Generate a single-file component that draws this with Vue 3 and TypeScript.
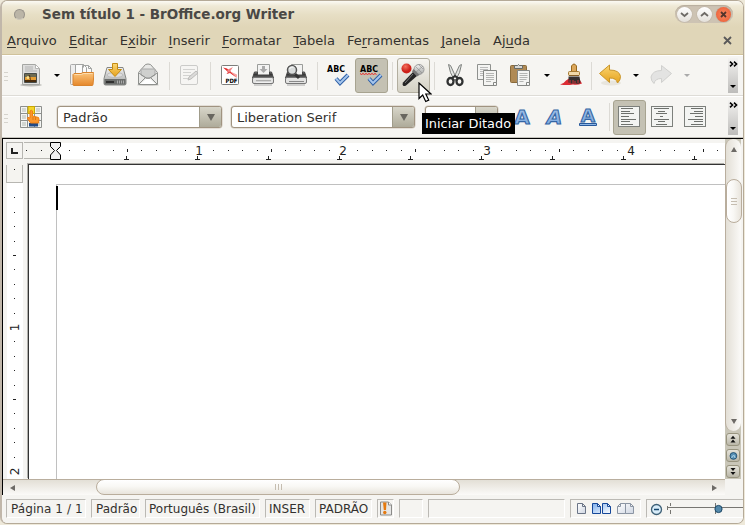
<script setup lang="ts">
interface Menu { pre: string; key: string; post: string }

const menus: Menu[] = [
  { pre: '', key: 'A', post: 'rquivo' },
  { pre: '', key: 'E', post: 'ditar' },
  { pre: 'E', key: 'x', post: 'ibir' },
  { pre: '', key: 'I', post: 'nserir' },
  { pre: '', key: 'F', post: 'ormatar' },
  { pre: '', key: 'T', post: 'abela' },
  { pre: 'Fe', key: 'r', post: 'ramentas' },
  { pre: '', key: 'J', post: 'anela' },
  { pre: 'Aj', key: 'u', post: 'da' },
]

const inch = 144
const step = inch / 10

function marks(from: number, to: number) {
  const list: { p: number; i: number }[] = []
  for (let i = from; i <= to; i++) if (i % 10 !== 0) list.push({ p: Math.round(i * step), i })
  return list
}

const hMarks = marks(-2, 46)
const vMarks = marks(-1, 19)
const tabs = Array.from({ length: 9 }, (_, n) => 102.5 + n * 71)
const rowY = Array.from({ length: 7 }, (_, n) => 3.5 + Math.round(n * 2.67))
const leftLens = [12, 9, 13, 8, 15, 9, 12]
const midLens = [15, 7, 11, 3, 15, 7, 11]
</script>

<template>
  <div class="window">
    <header class="title">
      <i class="dot"></i>
      <span class="caption">Sem título 1 - BrOffice.org Writer</span>
      <div class="controls">
        <svg class="ctl" viewBox="0 0 15 15"><path d="M4 6l3.500 3L11 6" /></svg>
        <svg class="ctl" viewBox="0 0 15 15"><path d="M4 9l3.500-3L11 9" /></svg>
        <svg class="ctl close" viewBox="0 0 15 15"><path d="M5 5l5 5M10 5l-5 5" /></svg>
      </div>
    </header>

    <nav class="menus">
      <span v-for="m in menus" :key="m.pre + m.key + m.post">{{ m.pre }}<u>{{ m.key }}</u>{{ m.post }}</span>
      <svg class="doc-close" viewBox="0 0 9 9"><path d="M1 1l7 7M8 1l-7 7" /></svg>
    </nav>

    <svg class="defs" width="0" height="0">
      <defs>
        <linearGradient id="orange" x2="0" y2="1"><stop stop-color="#fbc57c" /><stop offset="1" stop-color="#e5872a" /></linearGradient>
        <linearGradient id="gold" x2="0" y2="1"><stop stop-color="#fbd673" /><stop offset="1" stop-color="#e5a21d" /></linearGradient>
        <linearGradient id="metal" x2="0" y2="1"><stop stop-color="#f2f2f2" /><stop offset="1" stop-color="#a2a4a2" /></linearGradient>
        <linearGradient id="dark" x2="0" y2="1"><stop stop-color="#9a9a9a" /><stop offset=".35" stop-color="#333" /><stop offset="1" stop-color="#666" /></linearGradient>
        <linearGradient id="blue" x2="0" y2="1"><stop stop-color="#a4c4ea" /><stop offset="1" stop-color="#7aa6dc" /></linearGradient>
        <linearGradient id="page" x2="1" y2="1"><stop stop-color="#fff" /><stop offset="1" stop-color="#cfd6e2" /></linearGradient>
        <linearGradient id="pageblue" x2="1" y2="1"><stop stop-color="#7fb0ee" /><stop offset="1" stop-color="#fff" /></linearGradient>
        <radialGradient id="ball" cx=".4" cy=".3"><stop stop-color="#f4705c" /><stop offset="1" stop-color="#cc2019" /></radialGradient>
      </defs>
    </svg>

    <div class="toolbar">
      <i class="grip"></i>
      <button class="slot"><svg class="ic" viewBox="0 0 24 24">
        <ellipse cx="12" cy="22" rx="11" ry="1.500" fill="#bcbbb7" />
        <path d="M3.500 1.500h13l4 4v16h-17z" fill="#dededd" stroke="#a5a6a3" /><path d="M16.500 1.500v4h4z" fill="#fff" stroke="#b5b5b3" />
        <path d="M6 4h8M6 6h8M6 8h12" stroke="#b4b4b4" />
        <path d="M5.500 10.500h12v9h-12z" fill="#e59c32" stroke="#464b49" /><path d="M6 11h11v3h-11z" fill="#6d6b52" /><path d="M6 17h11v2H6zM11 12l1 6-3-5zM15 13l-2 5z" fill="#4a2c0c" /><circle cx="9" cy="14.500" r="1.500" fill="#fde28a" />
      </svg></button>
      <i class="caret"></i>
      <button class="slot"><svg class="ic" viewBox="0 0 24 24">
        <path d="M.5 2.500q0-1 1-1h4l2 3v17h-6q-1 0-1-1z" fill="#eee" stroke="#aaa" /><path d="M5.500 1.500h8l3 3v12h-11zM12.500 2.500h6l3 3v9h-9z" fill="#fbfbfb" stroke="#a2a4a2" /><path d="M18.500 2.500v3h3M13.500 1.500v3" fill="none" stroke="#a2a4a2" />
        <path d="M4 10.500h7l2-1h10q1 0 1 1l-1 11q0 1-1 1H4q-1 0-1-1v-10z" fill="url(#orange)" stroke="#d9832c" /><path d="M4.500 11.500h7l2-1h9" fill="none" stroke="#fddcae" />
      </svg></button>
      <button class="slot"><svg class="ic" viewBox="0 0 24 24">
        <path d="M4 4.500h16l3 11v5q0 1.500-1.500 1.500h-19Q1 22 1 20.500v-5z" fill="url(#metal)" stroke="#858784" /><path d="M1.500 16h21v5.500h-21z" fill="#6b6d6b" /><path d="M3 19h8" stroke="#303030" stroke-width="2" /><path d="M14.500 17.500v3M16.500 17.500v3M18.500 17.500v3M20.500 17.500v3" stroke="#aaa" /><ellipse cx="12" cy="12" rx="8" ry="2.500" fill="#ddd" stroke="#bbb" />
        <path d="M9.500.5h5v6h4l-6.500 7-6.500-7h4z" fill="url(#gold)" stroke="#c38b12" />
      </svg></button>
      <button class="slot"><svg class="ic" viewBox="0 0 24 24">
        <ellipse cx="12" cy="22" rx="11" ry="1" fill="#d2d1ce" />
        <path d="M2.500 9.500l7-8q2.500-1 5 0l7 8v12h-19z" fill="#e8e8e6" stroke="#8f918e" /><path d="M5 6h14v6l-7 4-7-4z" fill="#cfd0ce" stroke="#aaa" /><path d="M3 10l7 5h4l7-5M3 21l7-7M21 21l-7-7" fill="none" stroke="#8f918e" /><path d="M4.500 21l5.500-5h4l5.500 5z" fill="#fff" />
      </svg></button>
      <i class="sep"></i>
      <button class="slot faded"><svg class="ic" viewBox="0 0 24 24">
        <rect x="3.500" y="2.500" width="17" height="19" rx="1.500" fill="#f7f7f6" stroke="#999" /><path d="M6 6.500h12M6 9.500h8M6 12.500h9M6 15.500h5" stroke="#aaa" /><path d="M11 17l1-3 7-6 2 2-7 6z" fill="#bbb" stroke="#777" />
      </svg></button>
      <i class="sep"></i>
      <button class="slot"><svg class="ic" viewBox="0 0 24 24">
        <rect x="3.500" y="2.500" width="17" height="19" rx="1" fill="#fff" stroke="#7c7e7b" /><path d="M5 4.500l4 1 6 5 4 4.500-7-5-3.500 1 1.500-2z" fill="#e32a2a" /><path d="M9 7l4-2 2-1-4 6z" fill="#f08080" /><path d="M12 8.500l7 3v3z" fill="#f7a3a3" />
        <text x="7.500" y="20" class="pdf" textLength="12" lengthAdjust="spacingAndGlyphs">PDF</text>
      </svg></button>
      <button class="slot"><svg class="ic" viewBox="0 0 24 24">
        <path d="M6.500 1.500h12v11h-12z" fill="#f3f3f2" stroke="#9b9d9a" /><path d="M11 3h3v3h2.500l-4 4-4-4H11z" fill="#aaa" />
        <path d="M3.500 9h3v3h12V9h2l2 6H1.500z" fill="url(#dark)" stroke="#444" /><rect x="1.500" y="14.500" width="21" height="6" rx="1.500" fill="#e3e3e2" stroke="#777" /><path d="M5 18h15" stroke="#777" /><path d="M5 19h15" stroke="#fff" /><path d="M3 22h18" stroke="#aaa" />
      </svg></button>
      <button class="slot"><svg class="ic" viewBox="0 0 24 24">
        <path d="M7.500 1.500h11v11h-11z" fill="#f3f3f2" stroke="#9b9d9a" />
        <path d="M3.500 9h3v3h12V9h2l2 6H1.500z" fill="url(#dark)" stroke="#444" /><rect x="1.500" y="14.500" width="21" height="6" rx="1.500" fill="#e3e3e2" stroke="#777" /><path d="M5 18.500h15" stroke="#888" /><path d="M3 22h18" stroke="#aaa" /><path d="M11 11l4 4" stroke="#333" stroke-width="3" /><circle cx="8" cy="7" r="4.500" fill="#d9dcdc" stroke="#555" stroke-width="1.500" /><path d="M5.500 6q1.500-3 4-2" stroke="#fff" fill="none" />
      </svg></button>
      <i class="sep wide"></i>
      <button class="slot"><svg class="ic" viewBox="0 0 24 24">
        <text x="1" y="9" class="abc" textLength="18" lengthAdjust="spacingAndGlyphs">ABC</text><path d="M10 15.500l4 4.500 8-8" class="check-edge" /><path d="M10 15.500l4 4.500 8-8" class="check" />
      </svg></button>
      <button class="slot on"><svg class="ic" viewBox="0 0 24 24">
        <text x="1" y="9" class="abc" textLength="18" lengthAdjust="spacingAndGlyphs">ABC</text><path d="M1 10.500l1.500 1L4 10.500l1.500 1L7 10.500l1.500 1L10 10.500l1.500 1L13 10.500l1.500 1L16 10.500l1.500 1" stroke="#e22" fill="none" /><path d="M10 15.500l4 4.500 8-8" class="check-edge" /><path d="M10 15.500l4 4.500 8-8" class="check" />
      </svg></button>
      <i class="sep wide"></i>
      <button class="slot hover"><svg class="ic" viewBox="0 0 24 24">
        <path d="M12.500 8.500l4 4L5 22.500q-2 1-3 0t0-3z" fill="#252525" /><path d="M12 11l-8 9" stroke="#777" /><circle cx="18" cy="6.500" r="5" fill="url(#metal)" stroke="#9a9a9a" /><path d="M15 4l6 6M18 2l4 4M14 10l8-7" stroke="#888" stroke-width=".6" /><path d="M12.500 6l6 6-2.500 1.500-5-5z" fill="#777" /><circle cx="5.500" cy="5.500" r="5" fill="url(#ball)" />
      </svg></button>
      <i class="sep wide"></i>
      <button class="slot"><svg class="ic" viewBox="0 0 24 24">
        <path d="M5.500 1.500l2 1 6 13-2 2q-5-8-6-16zM18.500 1.500l-2 1-6 13 2 2q5-8 6-16z" fill="#e3e5e3" stroke="#7d807d" /><ellipse cx="7.500" cy="18.500" rx="3" ry="3.500" fill="none" stroke="#303232" stroke-width="2.300" /><ellipse cx="16.500" cy="18.500" rx="3" ry="3.500" fill="none" stroke="#303232" stroke-width="2.300" /><path d="M9 15l3-2 3 2" fill="none" stroke="#303232" stroke-width="2" />
      </svg></button>
      <button class="slot"><svg class="ic" viewBox="0 0 24 24">
        <path d="M1.500 1.500h13v15h-13z" fill="#f4f4f2" stroke="#8f918e" /><path d="M4 4.500h8M4 6.500h8M4 8.500h5M4 10.500h3M4 12.500h3" stroke="#bbb" /><path d="M7.500 7.500h13v15h-13z" fill="#f4f4f2" stroke="#858784" /><path d="M10 10.500h8M10 12.500h8M10 14.500h8M10 16.500h8M10 18.500h5" stroke="#b4b5b3" /><path d="M17.500 22v-2.500h3" fill="#fff" stroke="#858784" />
      </svg></button>
      <button class="slot"><svg class="ic" viewBox="0 0 24 24">
        <rect x="1.500" y="2.500" width="16" height="17" rx="1" fill="#b08a55" stroke="#8a6a3a" /><path d="M5.500 5.500v-3h3q1-2 2 0h3v3z" fill="#d6d7d5" stroke="#686a67" /><path d="M8.500 7.500h12v15h-12z" fill="#f4f4f2" stroke="#858784" /><path d="M10.500 10.500h8M10.500 12.500h8M10.500 14.500h8M10.500 16.500h7M10.500 18.500h4" stroke="#b4b5b3" /><path d="M17.500 22v-2.500h3" fill="#fff" stroke="#858784" />
      </svg></button>
      <i class="caret"></i>
      <button class="slot"><svg class="ic" viewBox="0 0 24 24">
        <path d="M0 21.500q4-1 6-4l3-2h10l3 5q-5 2-9 1-6 1-13 0z" fill="#dc2c34" /><path d="M8.500 13.500h11l1 6q-2 2-4 1-4 1-8-1z" fill="#37302f" /><path d="M10 17v3M13 17v4M15 18v3M18 17v3" stroke="#d3333a" /><path d="M11.500 9V3q2.500-4 5 0v6z" fill="#dca75a" stroke="#96671e" /><rect x="8.500" y="8.500" width="11" height="4" rx="1" fill="#f1d9aa" stroke="#a57a34" /><path d="M9 12.500h10" stroke="#875f26" />
      </svg></button>
      <i class="sep thin"></i>
      <button class="slot"><svg class="ic" viewBox="0 0 24 24">
        <ellipse cx="13" cy="20" rx="10" ry="2.500" fill="#e8e5dd" />
        <path d="M1.500 10.500l10-8.500v5q10 0 11 6.500 0 4-3 6.500-1-5-8-5v4.500z" fill="url(#gold)" stroke="#c9952a" />
      </svg></button>
      <i class="caret"></i>
      <button class="slot"><svg class="ic" viewBox="0 0 24 24">
        <path d="M22.500 10.500L12.500 2.500v5q-9 0-10.500 6.500 0 4 3 6.500 1-5 7.500-5v4z" fill="#e3e3e2" stroke="#d0d0ce" />
      </svg></button>
      <i class="caret off"></i>
      <div class="more"><b></b></div>
      <svg class="chevrons" viewBox="0 0 9 6"><path d="M1 .7L3.500 3 1 5.300M5 .7L7.500 3 5 5.300" /></svg>
    </div>

    <div class="toolbar second">
      <i class="grip"></i>
      <button class="slot styles"><svg class="ic" viewBox="0 0 24 24">
        <path d="M1.500 1.500h21v21h-21z" fill="#f3f4f2" stroke="#8d8f8c" /><path d="M8.500 1v22M15.500 1v22M1 8.500h22M1 15.500h22" stroke="#8d8f8c" /><path d="M3 3h4v4H3zM17 3h4v4h-4zM3 10h4v4H3zM3 17h4v4H3zM17 17h4v4h-4z" fill="#d2d6d2" /><path d="M9 1.500h6.500v7H9z" fill="#f3d52b" stroke="#c9a700" /><path d="M10 18h9v3.500h-9z" fill="#204a87" /><path d="M11 6q1.500-1.500 2.500 0v5l6 1.500q1 1 0 5.500h-8l-3-4.500q-.5-2 2.500-.5z" fill="#f9962e" stroke="#f07f10" /><path d="M14 12v3M16.500 12v3" stroke="#e07a10" />
      </svg></button>
      <div class="combo style"><span>Padrão</span><b><i></i></b></div>
      <div class="combo font"><span>Liberation Serif</span><b><i></i></b></div>
      <div class="combo size"><span>12</span><b><i></i></b></div>
      <button class="slot bold"><svg class="ic" viewBox="0 0 24 24"><text x="12" y="18.500" class="glyph fat">A</text></svg></button>
      <button class="slot"><svg class="ic" viewBox="0 0 24 24"><text x="11.500" y="18.500" class="glyph fat slant">A</text></svg></button>
      <button class="slot"><svg class="ic" viewBox="0 0 24 24"><text x="12" y="16.500" class="glyph">A</text><path d="M3.500 18.500h17v2h-17z" fill="#8db6e6" stroke="#28599b" /></svg></button>
      <i class="sep"></i>
      <button class="slot on"><svg class="ic" viewBox="0 0 24 24"><rect x="1.500" y="1.500" width="21" height="20" class="sheet" /><path v-for="(y, r) in rowY" :key="r" :d="`M4 ${y}h${leftLens[r]}`" class="ln" /></svg></button>
      <button class="slot"><svg class="ic" viewBox="0 0 24 24"><rect x="1.500" y="1.500" width="21" height="20" class="sheet" /><path v-for="(y, r) in rowY" :key="r" :d="`M${11.500 - midLens[r] / 2} ${y}h${midLens[r]}`" class="ln" /></svg></button>
      <button class="slot"><svg class="ic" viewBox="0 0 24 24"><rect x="1.500" y="1.500" width="21" height="20" class="sheet" /><path v-for="(y, r) in rowY" :key="r" :d="`M20 ${y}h-${leftLens[r]}`" class="ln" /></svg></button>
      <div class="more"><b></b></div>
      <svg class="chevrons" viewBox="0 0 9 6"><path d="M1 .7L3.500 3 1 5.300M5 .7L7.500 3 5 5.300" /></svg>
    </div>

    <main class="work">
      <div class="left">
        <div class="top-ruler">
          <div class="tabstop"><i></i></div>
          <svg class="hruler" width="701" height="20" viewBox="0 0 701 20" shape-rendering="crispEdges">
            <path d="M0 1h701v16H0z" fill="#fff" /><path d="M0 1h31v15H0z" fill="#f5f4f0" /><path d="M0 .5h31M0 16.500h31" stroke="#b7b6b1" />
            <rect v-for="m in hMarks" :key="m.i" :x="31 + m.p" :y="m.i % 5 === 0 ? 7 : 8" width="1" :height="m.i % 5 === 0 ? 3 : 1" fill="#222" />
            <path v-for="t in tabs" :key="t" :d="`M${t} 14v4M${t - 2.5} 17.500h5`" class="tab" />
            <text v-for="n in 4" :key="n" :x="31 + n * inch" y="12.500" class="num">{{ n }}</text>
            <path d="M26.500.5h10v4l-4 4 4 4.500v4.500h-10V13l4-4.500-4-4z" fill="#f0f0f0" stroke="#000" shape-rendering="auto" />
          </svg>
        </div>
        <div class="canvas">
          <svg class="vruler" width="18" height="315" viewBox="0 0 18 315" shape-rendering="crispEdges">
            <path d="M1 1h16v314H1z" fill="#fff" /><path d="M.5 1v17.500h16V1" fill="#f5f4f0" stroke="#b7b6b1" />
            <rect v-for="m in vMarks" :key="m.i" :x="m.i % 5 === 0 ? 7 : 8" :y="19 + m.p" :width="m.i % 5 === 0 ? 3 : 1" height="1" fill="#222" />
            <text v-for="n in 2" :key="n" :transform="`translate(12.500 ${19.500 + n * inch}) rotate(-90)`" class="num">{{ n }}</text>
          </svg>
          <div class="paper"><div class="margins"><i class="insertion"></i></div></div>
        </div>
        <div class="hscroll">
          <i class="arrow l"></i><div class="hthumb"><i></i><i></i><i></i></div><i class="arrow r"></i>
        </div>
      </div>
      <div class="right">
        <div class="vscroll"><i class="arrow u"></i><div class="vthumb"><i></i><i></i><i></i></div><i class="arrow d"></i></div>
        <div class="navs">
          <span><svg viewBox="0 0 13 13"><path d="M6.500 2l3 3.500h-6zM6.500 6.500l3 3.500h-6z" fill="#111" /></svg></span>
          <span><svg viewBox="0 0 13 13"><circle cx="7" cy="7" r="4" fill="#5790b5" stroke="#174769" /><path d="M5 9.500q0-3 3-3l1 3" fill="none" stroke="#bde0f3" /></svg></span>
          <span><svg viewBox="0 0 13 13"><path d="M6.500 6l3-3.500h-6zM6.500 10.500l3-3.500h-6z" fill="#111" /></svg></span>
        </div>
        <div class="corner"></div>
      </div>
    </main>

    <footer class="status">
      <span class="f1">Página 1 / 1</span>
      <span class="f2">Padrão</span>
      <span class="f3">Português (Brasil)</span>
      <span class="f4">INSER</span>
      <span class="f5">PADRÃO</span>
      <span class="f6"><svg viewBox="0 0 14 16"><path d="M1.500 1.500h8l3 3v10h-11z" fill="#e6e6e5" stroke="#8b8b89" /><path d="M9.500 1.500v3h3" fill="#fff" stroke="#8b8b89" /><path d="M4 2h3.500L7 9.500H4.800z" fill="#e57a10" /><circle cx="5.800" cy="12" r="1.700" fill="#e57a10" /></svg></span>
      <span class="f7"></span>
      <span class="f8"></span>
      <span class="f9"><svg viewBox="0 0 68 16">
        <path d="M5.500 3.500h5l3 3v7h-8zM10.500 3.500v3h3" fill="url(#page)" stroke="#6b7587" />
        <path d="M20.500 3.500h5l3 3v7h-8zM25.500 3.500v3h3M30.500 3.500h5l3 3v7h-8zM35.500 3.500v3h3" fill="url(#pageblue)" stroke="#16489a" />
        <path d="M48.500 3.500h5v10h-8v-7zM53.500 3.500h5l3 3v7h-8zM48.500 3.500v3h-3M58.500 3.500v3h3" fill="url(#page)" stroke="#8b95a3" />
      </svg></span>
      <span class="f10"><svg viewBox="0 0 97 18">
        <circle cx="9.500" cy="9.500" r="5" fill="#d8ecf9" stroke="#3f6177" stroke-width="1.300" /><path d="M7 9.500h5" stroke="#17486e" stroke-width="1.500" />
        <path d="M20 7.500h77M23.500 3v3M23.500 10v4M20.500 6v4M68.500 3v11" fill="none" stroke="#777672" /><circle cx="71.500" cy="9" r="3.600" fill="#5489ab" stroke="#1c4766" />
      </svg></span>
    </footer>

    <div class="tooltip">Iniciar Ditado</div>
    <svg class="pointer" viewBox="0 0 14 21"><path d="M1 1v15.500l3.700-3.500 3 6.500 3-1.400-2.900-6.100H13z" fill="#fff" stroke="#000" stroke-width="1.200" /></svg>
  </div>
</template>

<style>
body { background: #eee9da; overflow: hidden; }
</style>

<style scoped>
* { box-sizing: border-box; }
.window { position: relative; width: 744px; height: 524px; border: 1px solid #b5aa98; border-left: 2px solid #c1b7aa; border-radius: 7px; overflow: hidden; display: flex; flex-direction: column; background: #f5f4f1; font: 13px "DejaVu Sans", sans-serif; color: #33312e; }
.defs { display: block; flex: none; height: 0; }
.title { height: 26px; flex: none; display: flex; align-items: center; padding-left: 12px; background: linear-gradient(#fbfaf4 0, #efe9d6 5px, #e6dec4 14px, #e0d6b8 26px); }
.dot { width: 11px; height: 11px; border-radius: 50%; background: #bbb5a7; border: 1px solid #97928a; border-bottom-color: #cdc8ba; }
.caption { margin-left: 17px; font-weight: bold; font-size: 13.500px; color: #4a4845; white-space: nowrap; width: 265px; }
.controls { margin-left: auto; margin-right: 10px; width: 58px; height: 18px; border-radius: 9px; background: #cdc3b3; display: flex; align-items: center; justify-content: space-between; padding: 0 2px; box-shadow: inset 0 1px 1px #b9ae9e; }
.ctl { width: 15px; height: 15px; border-radius: 50%; background: linear-gradient(#fff, #e4e0da); fill: none; stroke: #6d6a66; stroke-width: 1.8; box-shadow: 0 0 1px #8d8377; }
.ctl.close { background: radial-gradient(#fa8a62, #e8582f); stroke: #54352c; }
.menus { height: 28px; flex: none; background: #e0d6b8; border-bottom: 1px solid #d0c29b; display: flex; align-items: center; padding: 0 11px 0 5px; gap: 12.200px; white-space: nowrap; }
.menus u { text-underline-offset: 2px; text-decoration-thickness: 1px; }
.doc-close { width: 9px; height: 9px; margin-left: auto; stroke: #595959; stroke-width: 1.8; }
.toolbar { position: relative; height: 41px; flex: none; display: flex; align-items: center; background: #f6f5f2; border-bottom: 1px solid #dedcd7; border-top: 1px solid #fff; }
.toolbar.second { height: 42px; border-bottom: 1px solid #c6c4bd; }
.grip { width: 4px; height: 9px; margin: 2px 7px 0 2px; flex: none; background: repeating-linear-gradient(#d5d3cd 0 1px, transparent 1px 4px); }
.slot { width: 33px; height: 35px; flex: none; padding: 0 1px 1px 0; border: 1px solid transparent; border-radius: 3px; background: none; display: flex; align-items: center; justify-content: center; }
.slot.on { background: #c4c1b3; border-color: #a7a390; }
.slot.hover { background: linear-gradient(#f6f5f1, #d3d0c3); border-color: #b2ae9f; }
.faded { opacity: .45; }
.ic { width: 24px; height: 24px; flex: none; display: block; }
.caret { width: 18px; flex: none; display: flex; justify-content: center; padding-right: 1px; }
.caret::before { content: ""; border: 3px solid transparent; border-top-color: #000; border-bottom: 0; }
.caret.off::before { border-top-color: #aaa; }
.sep { width: 8px; height: 28px; flex: none; background: linear-gradient(#dcdad5, #dcdad5) center / 1px 100% no-repeat; }
.sep.wide { width: 9px; }
.sep.thin { width: 5px; }
.pdf { font: bold 6px "DejaVu Sans", sans-serif; fill: #000; }
.abc { font: bold 9.500px "DejaVu Sans", sans-serif; fill: #000; }
.check-edge { fill: none; stroke: #2c5ea6; stroke-width: 4; }
.check { fill: none; stroke: #a6c6ec; stroke-width: 2; }
.more { margin-left: auto; margin-right: 5px; width: 10px; height: 35px; background: linear-gradient(#f3f2f0, #bdbcba); display: flex; align-items: flex-end; justify-content: center; padding-bottom: 5px; }
.more b { border: 3px solid transparent; border-top-color: #000; border-bottom: 0; }
.chevrons { position: absolute; right: 5px; top: 5px; width: 9px; height: 6px; fill: none; stroke: #000; stroke-width: 1.600; }
.combo { height: 22px; flex: none; border: 1px solid #a09380; border-radius: 3px; background: #fff; display: flex; align-items: center; box-shadow: 0 0 0 .5px #cfc8bb; overflow: hidden; }
.combo span { flex: 1; padding-left: 5px; white-space: nowrap; }
.combo b { width: 22px; height: 100%; background: linear-gradient(#d8d6ca, #aeab9a); border-left: 1px solid #a09c8b; display: flex; align-items: center; justify-content: center; }
.combo b i { border: 4px solid transparent; border-top: 7px solid #68665f; border-bottom: 0; }
.combo.style { width: 165px; margin-left: 9px; }
.combo.font { width: 184px; margin-left: 9px; }
.combo.size { width: 73px; margin-left: 10px; }
.bold { margin-left: 8px; }
.glyph { font: bold 18.500px "DejaVu Sans", sans-serif; text-anchor: middle; fill: url(#blue); stroke: #3465a4; stroke-width: 1.1; }
.fat { font-size: 20px; }
.slant { font-style: italic; }
.sheet { fill: #f3f4f2; stroke: #7d807c; }
.ln { stroke: #6e716d; stroke-width: 1; fill: none; }
.work { flex: none; height: 357px; display: flex; border-left: 1px solid #000; border-top: 1px solid #000; }
.left { width: 722px; flex: none; display: flex; flex-direction: column; border-top: 1px solid #f5f4f1; }
.top-ruler { height: 24px; flex: none; display: flex; padding: 2px 0 0 3px; }
.tabstop { width: 17px; height: 17px; margin-right: 1px; border: 1px solid #b7b6b1; display: flex; align-items: center; justify-content: center; padding-top: 1px; }
.tabstop i { width: 7px; height: 6px; border: solid #222; border-width: 0 0 2px 2px; }
.hruler { flex: none; display: block; }
.num { font: 12px "DejaVu Sans", sans-serif; text-anchor: middle; fill: #222; }
.tab { stroke: #222; fill: none; stroke-width: 1; }
.canvas { flex: 1; min-height: 0; display: flex; padding-left: 3px; }
.vruler { flex: none; margin-right: 4px; display: block; }
.paper { flex: 1; background: #fff; border-left: 1px solid #333; border-top: 1px solid #333; padding: 19px 0 0 27px; box-shadow: -1px -1px #b0afaa; }
.margins { height: 100%; border-left: 1px solid #c0c0c0; border-top: 1px solid #c0c0c0; padding-top: 1px; }
.insertion { display: block; width: 2px; height: 24px; background: #000; margin-left: -1px; }
.hscroll { height: 16px; flex: none; display: flex; align-items: center; border-top: 1px solid #b9ae9e; background: linear-gradient(#e3dfd6, #fbfaf8); padding: 0 8px 0 7px; position: relative; }
.hthumb { width: 364px; height: 16px; margin: -1px auto 0 81px; border: 1px solid #b9ad9c; border-radius: 8px; background: linear-gradient(#fff, #f9f8f5 45%, #e8e4dc); display: flex; align-items: center; justify-content: center; gap: 2px; }
.hthumb i { width: 1px; height: 6px; background: #c5bdb0; }
.arrow { border: 3px solid transparent; flex: none; }
.arrow.l { border-right: 5px solid #6d6a66; border-left: 0; }
.arrow.r { border-left: 5px solid #6d6a66; border-right: 0; }
.arrow.u { border-bottom: 5px solid #6d6a66; border-top: 0; }
.arrow.d { border-top: 5px solid #6d6a66; border-bottom: 0; }
.right { width: 16px; flex: none; display: flex; flex-direction: column; background: #c9c6b8; }
.vscroll { height: 292px; flex: none; border-left: 1px solid #b9ae9e; border-radius: 8px; background: linear-gradient(90deg, #e3dfd6, #fbfaf8); display: flex; flex-direction: column; align-items: center; padding: 8px 0 7px; }
.vthumb { width: 16px; height: 44px; margin-top: 27px; margin-bottom: auto; border: 1px solid #b9ad9c; border-radius: 8px; background: linear-gradient(90deg, #fff, #f9f8f5 45%, #e8e4dc); display: flex; flex-direction: column; align-items: center; justify-content: center; gap: 2px; }
.vthumb i { width: 6px; height: 1px; background: #c5bdb0; }
.navs { flex: 1; display: flex; flex-direction: column; align-items: center; gap: 3px; padding-top: 2px; }
.navs span { width: 14px; height: 13px; border: 1px solid #98947f; border-radius: 3px; background: linear-gradient(#e5e3da, #bab7a8); }
.navs svg { display: block; width: 12px; height: 11px; }
.corner { height: 16px; flex: none; background: #f5f4f1; }
.status { flex: 1; display: flex; padding: 4px 0 0 4px; font-size: 12px; background: #f5f4f1; gap: 5px; }
.status span { height: 19px; flex: none; border: 1px solid #bbb9b4; border-right-color: #fff; border-bottom-color: #fff; padding-left: 4px; line-height: 18px; white-space: nowrap; overflow: hidden; }
.status .f1 { width: 80px; letter-spacing: .08px; }
.status .f2 { width: 49px; }
.status .f3 { width: 115px; padding-left: 3px; }
.status .f4 { width: 45px; padding-left: 3px; }
.status .f5 { width: 57px; padding-left: 3px; }
.status .f6 { width: 17px; padding: 0 0 0 1px; }
.status .f6 svg { display: block; width: 14px; height: 17px; }
.status .f7 { width: 24px; }
.status .f8 { width: 137px; }
.status .f9 { width: 71px; padding: 0 0 0 1px; }
.status .f9 svg { display: block; width: 68px; height: 16px; }
.status .f10 { width: 98px; padding: 0; border-right: 0; }
.status .f10 svg { display: block; width: 97px; height: 18px; }
.tooltip { position: absolute; left: 420px; top: 112px; width: 93px; height: 21px; padding-left: 3px; background: #000; color: #fff; font-size: 12.900px; line-height: 21px; white-space: nowrap; }
.pointer { position: absolute; left: 416px; top: 81px; width: 14px; height: 21px; }
</style>
